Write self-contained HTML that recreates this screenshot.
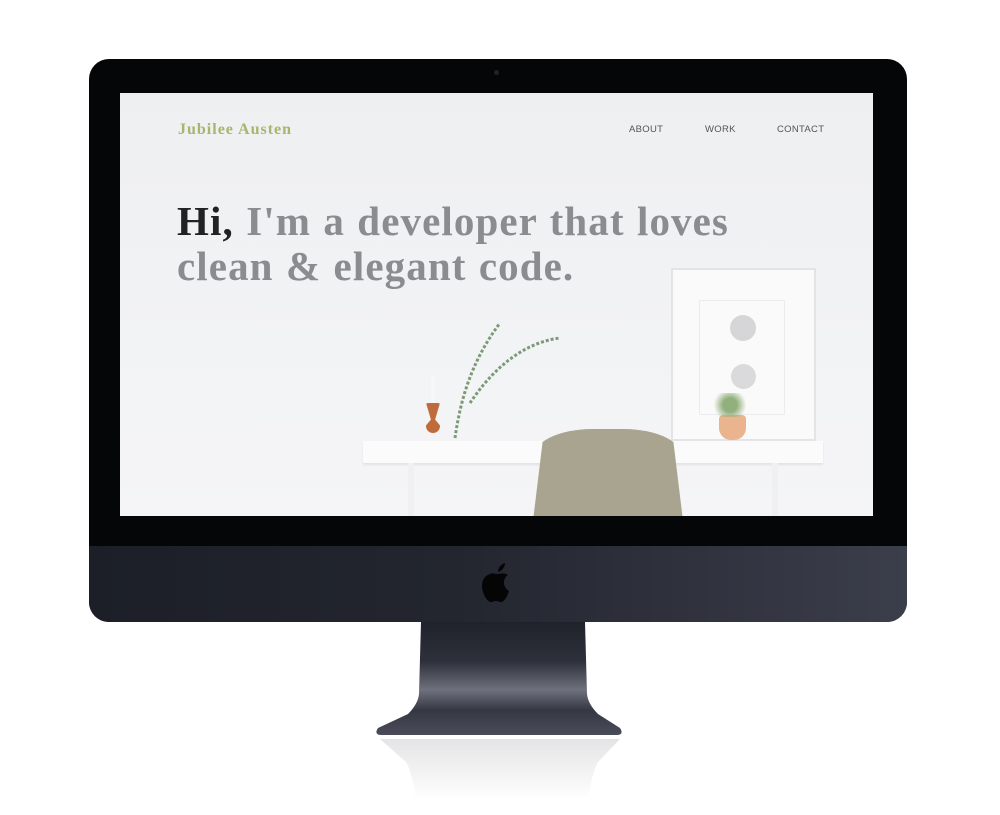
<!DOCTYPE html>
<html><head><style>
*{margin:0;padding:0;box-sizing:border-box}
body{width:1000px;height:815px;background:#fff;position:relative;overflow:hidden;font-family:"Liberation Sans",sans-serif}
.abs{position:absolute}
#frame{left:89px;top:59px;width:818px;height:563px;border-radius:20px;background:#050608;overflow:hidden}
#chin{left:89px;top:546px;width:818px;height:76px;border-radius:0 0 20px 20px;background:linear-gradient(90deg,#1c1f27 0%,#23262f 45%,#3b3e4b 100%)}
#screen{left:120px;top:93px;width:753px;height:423px;background:linear-gradient(180deg,#eeeff1 0%,#f2f3f5 60%,#f5f5f7 100%);overflow:hidden}
.logo{left:58px;top:28px;font-family:"Liberation Serif",serif;font-weight:bold;font-size:16px;color:#a8b56e;letter-spacing:1px}
.nav{top:31px;font-size:9.5px;color:#555;letter-spacing:.3px}
h1{position:absolute;left:57px;top:106px;font-family:"Liberation Serif",serif;font-weight:bold;font-size:41px;line-height:45px;color:#8b8c8f;letter-spacing:1.1px;word-spacing:1px}
h1 b{color:#222}
</style></head><body>
<div class="abs" id="frame"></div>
<div class="abs" style="left:494px;top:70px;width:5px;height:5px;border-radius:50%;background:#222"></div>
<div class="abs" id="chin"></div>
<svg class="abs" style="left:480px;top:561px" width="36" height="44" viewBox="0 0 36 44"><path d="M18 11c0-4 3-8 7-9 0 4-3 8-7 9zM8 14c4-3 7-1 10-1 3 0 6-2 10 1-3 2-4 5-4 8 0 4 3 7 5 8-2 6-5 11-8 11-2 0-3-1-5-1s-3 1-5 1c-4 0-9-9-9-16 0-6 3-10 6-11z" fill="#050506"/></svg>
<svg class="abs" style="left:370px;top:622px" width="260" height="190" viewBox="0 0 260 190">
<defs><linearGradient id="g" x1="0" y1="0" x2="0" y2="1"><stop offset="0" stop-color="#1f222b"/><stop offset=".35" stop-color="#2e313b"/><stop offset=".6" stop-color="#6e717d"/><stop offset=".78" stop-color="#353843"/><stop offset="1" stop-color="#4a4d59"/></linearGradient>
<linearGradient id="r" x1="0" y1="0" x2="0" y2="1"><stop offset="0" stop-color="#e4e4e6"/><stop offset="1" stop-color="#fff"/></linearGradient></defs>
<path d="M51 0H215L217 72Q218 82 228 92L250 106Q254 112 248 113H10Q4 112 8 106L38 92Q48 82 49 72Z" fill="url(#g)"/>
<path d="M10 117H250L228 140Q222 150 218 178H46Q42 150 36 140Z" fill="url(#r)"/>
</svg>
<div class="abs" id="screen">
<div class="abs logo">Jubilee Austen</div>
<div class="abs nav" style="left:509px">ABOUT</div>
<div class="abs nav" style="left:585px">WORK</div>
<div class="abs nav" style="left:657px">CONTACT</div>
<h1><b>Hi,</b> I'm a developer that loves<br>clean &amp; elegant code.</h1>
<div class="abs" style="left:551px;top:175px;width:145px;height:173px;background:#fafafa;border:2px solid #e4e4e6"></div>
<div class="abs" style="left:579px;top:207px;width:86px;height:115px;border:1px solid #ececee"></div>
<div class="abs" style="left:610px;top:222px;width:26px;height:26px;border-radius:50%;background:#d6d6d8"></div>
<div class="abs" style="left:611px;top:271px;width:25px;height:25px;border-radius:50%;background:#dadadc"></div>
<svg class="abs" style="left:300px;top:220px" width="150" height="130"><path d="M35 125C40 90 50 50 80 10M50 90C70 60 100 30 140 25" stroke="#7d9a78" stroke-width="3" fill="none" stroke-dasharray="3 2"/></svg>
<div class="abs" style="left:311px;top:283px;width:4px;height:28px;background:#f7f7f7"></div>
<div class="abs" style="left:306px;top:310px;width:14px;height:30px;background:#c06b3b;border-radius:2px 2px 7px 7px;clip-path:polygon(0 0,100% 0,65% 55%,100% 75%,100% 100%,0 100%,0 75%,35% 55%)"></div>
<div class="abs" style="left:599px;top:322px;width:27px;height:25px;border-radius:4px 4px 12px 12px;background:#e9b48e"></div>
<div class="abs" style="left:590px;top:300px;width:40px;height:24px;background:radial-gradient(circle,#92b07c 30%,transparent 70%)"></div>
<div class="abs" style="left:243px;top:348px;width:460px;height:22px;background:#fbfbfb;box-shadow:0 2px 2px #e2e2e4"></div>
<div class="abs" style="left:288px;top:370px;width:6px;height:53px;background:#f0f0f2"></div>
<div class="abs" style="left:652px;top:370px;width:6px;height:53px;background:#f0f0f2"></div>
<div class="abs" style="left:412px;top:336px;width:152px;height:100px;background:#a9a48f;border-radius:60px 60px 0 0/30px 30px 0 0;clip-path:polygon(8% 0,92% 0,100% 100%,0 100%)"></div>
</div>
</body></html>
